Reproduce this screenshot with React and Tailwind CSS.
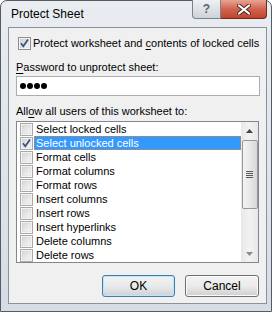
import React from "react";

const items = [
  "Select locked cells",
  "Select unlocked cells",
  "Format cells",
  "Format columns",
  "Format rows",
  "Insert columns",
  "Insert rows",
  "Insert hyperlinks",
  "Delete columns",
  "Delete rows",
];

function CheckBox({ checked, flat }) {
  return (
    <svg width="13" height="13" viewBox="0 0 13 13" className="shrink-0">
      <defs>
        <linearGradient id={flat ? "cbf" : "cb"} x1="0" y1="0" x2="1" y2="1">
          <stop offset="0" stopColor={flat ? "#d6d6d6" : "#cbcfd5"} />
          <stop offset="1" stopColor={flat ? "#f6f6f6" : "#f7f7f7"} />
        </linearGradient>
      </defs>
      <rect x="0.5" y="0.5" width="12" height="12" fill="#fff" stroke={flat ? "#a8a8a8" : "#8e8f8f"} />
      <rect x="2" y="2" width="9" height="9" fill={`url(#${flat ? "cbf" : "cb"})`} stroke="#c9cdd3" strokeWidth="0.5" />
      {checked && (
        <path d="M3 6.2 L5.3 9.2 L10 2.5" fill="none" stroke="#3c4d82" strokeWidth="1.7" />
      )}
    </svg>
  );
}

export default function App() {
  return (
    <div className="w-[272px] h-[312px] bg-white relative overflow-hidden" style={{ fontFamily: "'Liberation Sans', Arial, sans-serif" }}>
      <div className="absolute left-0 top-0 w-[272px] h-[312px] rounded-t-[7px] border border-[#555b63] bg-gradient-to-b from-[#e9edf2] via-[#dfe5eb] to-[#d5dce5] flex flex-col pl-[7px] pr-[4px] pb-[7px]">
        {/* title bar */}
        <div className="h-[26px] flex items-start relative">
          <span className="text-[12px] text-black pl-[3px] pt-[6px] leading-[14px]">Protect Sheet</span>
          <div className="absolute right-0 top-[-1px] flex">
            <div className="w-[29px] h-[19px] rounded-bl-[4px] border border-[#7d838c] border-t-0 bg-gradient-to-b from-[#eef1f4] to-[#cdd3da] flex items-center justify-center text-[12px] font-bold text-[#5a6470] leading-none">
              ?
            </div>
            <div className="w-[46px] h-[19px] rounded-br-[4px] border border-[#6d2a1f] border-t-0 border-l-0 bg-gradient-to-b from-[#e8a493] via-[#d0634d] to-[#c1452c] flex items-center justify-center">
              <svg width="14" height="11" viewBox="0 0 14 11">
                <path d="M2 1.5 L12 9.5 M12 1.5 L2 9.5" stroke="#4a2a25" strokeWidth="4" strokeLinecap="round" />
                <path d="M2 1.5 L12 9.5 M12 1.5 L2 9.5" stroke="#ffffff" strokeWidth="2.2" strokeLinecap="round" />
              </svg>
            </div>
          </div>
        </div>

        {/* client area */}
        <div className="flex-1 border border-[#8a929c] bg-[#f0f0f0] text-[11px] text-black leading-[14px] whitespace-nowrap flex flex-col pl-[7px]">
          <div className="flex items-center gap-[2px] mt-[8px] ml-[2px] h-[14px]">
            <CheckBox checked />
            <span>
              Protect worksheet and <span className="underline underline-offset-2">c</span>ontents of locked cells
            </span>
          </div>

          <div className="mt-[10px] h-[14px]">
            <span className="underline underline-offset-2">P</span>assword to unprotect sheet:
          </div>
          <div className="mt-[2px] w-[244px] h-[20px] border border-[#abadb3] bg-white flex items-center pl-[3px] gap-[1px]">
            {[0, 1, 2, 3].map((i) => (
              <span key={i} className="w-[6px] h-[6px] rounded-full bg-black" />
            ))}
          </div>

          <div className="mt-[8px] h-[14px]">
            All<span className="underline underline-offset-2">o</span>w all users of this worksheet to:
          </div>

          {/* list box */}
          <div className="mt-[3px] w-[243px] h-[142px] border border-[#828790] bg-white flex">
            <div className="flex-1 flex flex-col">
              {items.map((t, i) => (
                <div key={t} className="h-[14px] flex items-center">
                  <div className="ml-[3px] w-[13px] flex">
                    <CheckBox checked={i === 1} flat />
                  </div>
                  <div
                    className={
                      i === 1
                        ? "ml-[1px] flex-1 h-[14px] bg-[#3399ff] text-white pl-[1px] border border-dotted border-[#e0822e] leading-[12px]"
                        : "ml-[1px] pl-[2px]"
                    }
                  >
                    {t}
                  </div>
                </div>
              ))}
            </div>
            {/* scrollbar */}
            <div className="w-[17px] h-full bg-gradient-to-r from-[#e8e8e8] via-[#f2f2f2] to-[#e8e8e8] flex flex-col items-center">
              <div className="h-[17px] flex items-center justify-center">
                <svg width="7" height="4" viewBox="0 0 7 4">
                  <path d="M0 4 L3.5 0 L7 4 Z" fill="#444" />
                </svg>
              </div>
              <div className="mt-[1px] w-[16px] h-[69px] rounded-[2px] border border-[#979797] bg-gradient-to-r from-[#f3f3f3] via-[#e8e8e8] to-[#d6d6d6] flex flex-col items-center justify-center gap-[1px]">
                <span className="w-[7px] h-[1px] bg-[#5a5a5a]" />
                <span className="w-[7px] h-[1px] bg-[#5a5a5a]" />
                <span className="w-[7px] h-[1px] bg-[#5a5a5a]" />
                <span className="w-[7px] h-[1px] bg-[#5a5a5a]" />
              </div>
              <div className="flex-1" />
              <div className="h-[17px] flex items-center justify-center">
                <svg width="7" height="4" viewBox="0 0 7 4">
                  <path d="M0 0 L3.5 4 L7 0 Z" fill="#8a8a8a" />
                </svg>
              </div>
            </div>
          </div>

          {/* buttons */}
          <div className="mt-[12px] flex justify-end gap-[10px] w-[243px]">
            <button className="w-[73px] h-[22px] rounded-[3px] border border-[#3c7fb1] bg-gradient-to-b from-[#f2f2f2] via-[#e9eaeb] to-[#cfd1d3] text-[12px] shadow-[inset_0_0_0_1px_#c2e4f6]">
              OK
            </button>
            <button className="w-[74px] h-[22px] rounded-[3px] border border-[#707070] bg-gradient-to-b from-[#f2f2f2] via-[#ebebeb] to-[#cfcfcf] text-[12px] shadow-[inset_0_0_0_1px_#fafafa]">
              Cancel
            </button>
          </div>
        </div>
      </div>
    </div>
  );
}
